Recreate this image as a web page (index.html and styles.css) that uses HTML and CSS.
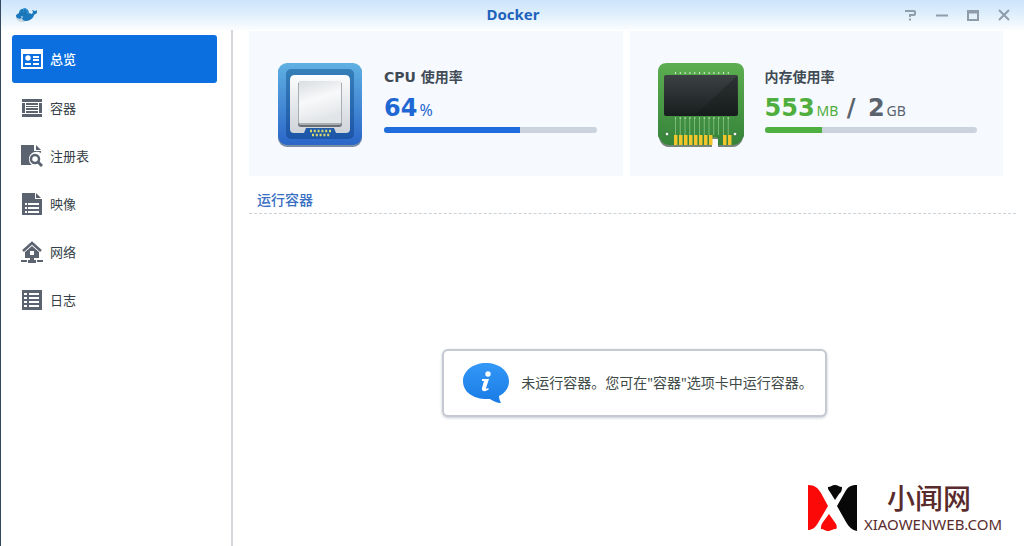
FILE: index.html
```html
<!DOCTYPE html>
<html lang="zh-CN">
<head>
<meta charset="utf-8">
<meta name="viewport" content="width=device-width, initial-scale=1">
<title>Docker</title>
<link rel="stylesheet" href="styles.css">
</head>
<body>
<div class="window">
  <header class="titlebar">
    <svg class="whale" viewBox="0 0 22 18" aria-hidden="true">
      <path d="M1 9l3-2 1-3 5-2 3 2 1 3 3 1 1-2-1-2 3 1 3-1-1 3-3 2c-1 4-5 6-9 6C5 16 1 14 1 9z" fill="#1b78bd"/>
      <path d="M4 7l1-3 5-2 3 2 1 4z" fill="#2f9ae0"/>
      <path d="M5 5h8M4 7h9M7 3v5M10 3v5" stroke="#135b94" stroke-width=".7"/>
      <path d="M1 11c2 2 4 2 6 1 0 2 2 3 4 3-4 2-9 1-10-4z" fill="#c7d7df"/>
      <circle cx="7" cy="11" r=".8" fill="#fff"/>
    </svg>
    <h1 class="title">Docker</h1>
    <div class="controls">
      <button class="control" type="button" aria-label="帮助"><svg viewBox="0 0 14 14"><path d="M1 3h9a1 1 0 0 1 1 1v2a1 1 0 0 1-1 1H6v2M6 10.500v2"/></svg></button>
      <button class="control" type="button" aria-label="最小化"><svg viewBox="0 0 14 14"><path d="M1 7.500h12"/></svg></button>
      <button class="control" type="button" aria-label="最大化"><svg viewBox="0 0 14 14"><path d="M2 3h10v9H2zM2 4.500h10"/></svg></button>
      <button class="control" type="button" aria-label="关闭"><svg viewBox="0 0 14 14"><path d="M2 2l10 10M12 2L2 12"/></svg></button>
    </div>
  </header>
  <div class="body">
    <nav class="sidebar">
      <a class="item item-active" href="#overview" aria-current="page">
        <svg class="icon" viewBox="0 0 22 22"><path fill-rule="evenodd" d="M0 1h22v20H0zM2 6v13h18V6z"/><circle cx="7" cy="10" r="2.700"/><path d="M4 15h6v2H4zM12 8h6v2h-6zM12 11h6v2h-6zM12 15h6v2h-6z"/></svg>总览</a>
      <a class="item" href="#container">
        <svg class="icon" viewBox="0 0 22 22"><path d="M1 2h20v3H1zM1 17h20v3H1zM1 6h3v10H1zM18 6h3v10h-3zM5 6h12v2H5zM5 9h12v1H5zM5 11h12v2H5zM5 14h12v2H5z"/></svg>容器</a>
      <a class="item" href="#registry">
        <svg class="icon" viewBox="0 0 22 22"><path d="M0 0h13v6h7v2c-5-3-12 0-12 6 0 3 1 5 3 6H0z"/><path d="M15 0l5 5h-5z"/><circle cx="14" cy="14" r="4" fill="none" stroke="currentColor" stroke-width="2.500"/><path d="M17 17l4 4" stroke="currentColor" stroke-width="3"/></svg>注册表</a>
      <a class="item" href="#image">
        <svg class="icon" viewBox="0 0 22 22"><path fill-rule="evenodd" d="M1 0h13v6h7v16H1zM4 10v2h2v-2zM7 10v2h11v-2zM4 14v2h2v-2zM7 14v2h11v-2zM4 18v2h2v-2zM7 18v2h11v-2z"/><path d="M15 0l5 5h-5z"/></svg>映像</a>
      <a class="item" href="#network">
        <svg class="icon" viewBox="0 0 22 22"><path d="M2 10l9-8 9 8" fill="none" stroke="currentColor" stroke-width="2.500"/><path fill-rule="evenodd" d="M11 5l7 6v6h-5v2h2v3H7v-3h2v-2H4v-6zM9 10v4h4v-4zM0 19h6v2H0zM16 19h6v2h-6z"/></svg>网络</a>
      <a class="item" href="#log">
        <svg class="icon" viewBox="0 0 22 22"><path fill-rule="evenodd" d="M1 1h20v20H1zM3 4v2h3V4zM8 4v2h10V4zM3 8v2h3V8zM8 8v2h10V8zM3 12v2h3v-2zM8 12v2h10v-2zM3 16v2h3v-2zM8 16v2h10v-2z"/></svg>日志</a>
    </nav>
    <main class="main">
      <div class="cards">
        <section class="card">
          <svg class="art" viewBox="0 0 88 88" aria-hidden="true">
            <defs>
              <linearGradient id="blue" x2="0" y2="1"><stop stop-color="#5fb0e2"/><stop offset="1" stop-color="#2b66c8"/></linearGradient>
              <linearGradient id="inner" x2="0" y2="1"><stop stop-color="#357fb9"/><stop offset="1" stop-color="#1d55a8"/></linearGradient>
              <linearGradient id="plate" x2="0" y2="1"><stop stop-color="#fbfcfd"/><stop offset="1" stop-color="#cfd4da"/></linearGradient>
              <linearGradient id="die" x2=".3" y2="1"><stop stop-color="#d9dde1"/><stop offset=".5" stop-color="#f8f9fa"/><stop offset="1" stop-color="#e2e5e8"/></linearGradient>
            </defs>
            <rect x="2" y="3" width="84" height="83" rx="9" fill="#7c8da5"/>
            <rect x="2" y="2" width="84" height="82" rx="9" fill="url(#blue)"/>
            <rect x="10" y="8" width="68" height="70" rx="5" fill="url(#inner)"/>
            <path d="M19 14h50q5 0 5 5v49q0 4-4 4H60l-2-5H30l-2 5H18q-4 0-4-4V19q0-5 5-5z" fill="url(#plate)"/>
            <rect x="22" y="21" width="44" height="45" rx="3" fill="#6a6f75"/>
            <rect x="22" y="21" width="44" height="43" rx="3" fill="#a9aeb3"/>
            <rect x="23" y="20" width="42" height="42" rx="1" fill="url(#die)"/>
            <path d="M34 70h22M36 74h19" stroke="#d9d96a" stroke-width="2.500" stroke-dasharray="2 1.800"/>
          </svg>
          <div class="usage">
            <h2 class="label" id="cpu">CPU 使用率</h2>
            <p class="value value-cpu">64<span class="unit unit-cpu">%</span></p>
            <div class="track" role="progressbar" aria-labelledby="cpu" aria-valuenow="64"><div class="fill fill-cpu" style="width:64%"></div></div>
          </div>
        </section>
        <section class="card">
          <svg class="art" viewBox="0 0 88 88" aria-hidden="true">
            <defs>
              <linearGradient id="green" x2="0" y2="1"><stop stop-color="#5cae50"/><stop offset="1" stop-color="#35833a"/></linearGradient>
              <linearGradient id="chip" x2="0" y2="1"><stop stop-color="#3c4243"/><stop offset="1" stop-color="#181d1e"/></linearGradient>
            </defs>
            <path d="M10 3h68q9 0 9 9v62l-2 6q-4 6-9 6H61v-8h-6v8H12q-6 0-9-6l-2-6V12Q1 3 10 3z" fill="#77867a"/>
            <path d="M10 2h68q9 0 9 9v63q0 2-2 4l-2 3q-3 3-7 3H61v-5a3 3 0 0 0-6 0v5H12q-4 0-7-3l-2-3q-2-2-2-4V11q0-9 9-9z" fill="url(#green)"/>
            <path d="M18 12h55M18 57h55" stroke="#d7edcf" stroke-width="2" stroke-dasharray="1 3.800"/>
            <path d="M18 65h55" stroke="#8ac486" stroke-width="18" stroke-dasharray=".8 4"/>
            <rect x="7" y="14" width="74" height="41" rx="2" fill="url(#chip)"/>
            <path d="M80 15v39H38z" fill="#151a1b" opacity=".35"/>
            <path d="M17 79h39M66 79h9" stroke="#f2c62a" stroke-width="10" stroke-dasharray="3.500 1.500"/>
            <circle cx="10" cy="73" r="2" fill="#f3f6ef" stroke="#2d6e32"/><circle cx="78" cy="73" r="2" fill="#f3f6ef" stroke="#2d6e32"/>
          </svg>
          <div class="usage">
            <h2 class="label" id="memory">内存使用率</h2>
            <p class="value value-memory">553<span class="unit">MB</span> <span class="slash">/</span> <span class="total">2<span class="unit">GB</span></span></p>
            <div class="track" role="progressbar" aria-labelledby="memory" aria-valuenow="27"><div class="fill fill-memory" style="width:27%"></div></div>
          </div>
        </section>
      </div>
      <h2 class="section-title">运行容器</h2>
      <div class="empty">
        <div class="message" role="status">
          <svg class="info" viewBox="0 0 48 42" aria-hidden="true">
            <defs><linearGradient id="bubble" x2="0" y2="1"><stop stop-color="#3398f6"/><stop offset="1" stop-color="#187be6"/></linearGradient></defs>
            <path d="M24 1c13 0 23 8 23 18 0 7-4 12-10 15 0 3 1 5 2 7-4 0-8-2-11-4C13 38 1 31 1 19 1 9 11 1 24 1z" fill="url(#bubble)"/>
            <circle cx="26" cy="12" r="2.700" fill="#fff"/>
            <path d="M20 17h7l-3 9c0 1 1 1 2 0l1 1c-3 3-8 3-7-1l2-7h-2z" fill="#fff"/>
          </svg>
          <p class="message-text">未运行容器。您可在"容器"选项卡中运行容器。</p>
        </div>
      </div>
    </main>
  </div>
  <div class="brand">
    <svg class="brand-mark" viewBox="0 0 49 48" aria-hidden="true">
      <path d="M0 1c7 0 10 3 13 8l7 13L10 39c-3 5-6 7-10 7zM21 30l7 10c1 2 1 4 0 5-4 0-5 2-8 2s-4-2-7-2c0-3 0-4 2-7z" fill="#fb0909"/>
      <path d="M49 1c-7 0-9 2-12 7l-8 14 9 16c3 5 6 8 11 9zM20 3c3 0 4-2 7-2s4 2 7 2c0 4-1 5-3 7l-4 6-5-8c-2-3-2-3-2-5z" fill="#080808"/>
    </svg>
    <div class="brand-text"><span class="brand-name">小闻网</span><span class="brand-url">XIAOWENWEB.COM</span></div>
  </div>
</div>
</body>
</html>
```
FILE: styles.css
```css
* { box-sizing: border-box; }
body {
  margin: 0;
  background: #fff;
  color: #414b55;
  font: 13px/20px "Noto Sans", "Noto Sans CJK SC", sans-serif;
}
h1, h2, p { margin: 0; }
.window {
  position: relative;
  display: flex;
  flex-direction: column;
  min-height: 100vh;
  border-left: 1px solid #34495e;
}
.titlebar {
  display: grid;
  grid-template-columns: 1fr auto 1fr;
  align-items: center;
  height: 30px;
  padding: 0 13px 0 14px;
  background: linear-gradient(#cce4fb, #e0f0fc 50%, #fbfdfe);
}
.whale { width: 22px; height: 18px; }
.title { color: #1f62bd; font-size: 15px; line-height: 28px; font-weight: 700; padding-bottom: 2px; }
.controls { display: flex; justify-content: flex-end; gap: 17px; }
.control { width: 14px; height: 14px; padding: 0; border: 0; background: none; }
.control svg { display: block; fill: none; stroke: #8f9dab; stroke-width: 2; }
.body { display: flex; flex: 1; }
.sidebar {
  flex: none;
  width: 232px;
  padding: 5px 14px 0 11px;
  border-right: 2px solid #d3d6da;
}
.item {
  display: flex;
  align-items: center;
  gap: 7px;
  height: 48px;
  padding-left: 9px;
  border-radius: 3px;
  color: #363f48;
  text-decoration: none;
}
.item-active { margin-bottom: 1px; background: #0c6fe0; color: #fff; font-weight: 500; }
.icon { width: 22px; height: 22px; fill: currentColor; color: #5a636f; }
.item-active .icon { color: #fff; }
.main {
  display: flex;
  flex: 1;
  flex-direction: column;
  min-width: 0;
  padding: 1px 8px 0 16px;
}
.cards { display: flex; gap: 7px; padding-right: 13px; }
.card {
  display: flex;
  flex: 1;
  gap: 20px;
  height: 145px;
  padding: 30px 26px 0 27px;
  background: #f6faff;
}
.art { flex: none; width: 88px; height: 88px; }
.usage { flex: 1; padding-top: 6px; }
.label { font: 700 14px/20px "DejaVu Sans", "Noto Sans CJK SC", sans-serif; color: #414b55; }
.value { font: 700 24px/32px "DejaVu Sans", sans-serif; margin-top: 5px; white-space: nowrap; }
.value-cpu { color: #1f68d4; }
.value-memory { color: #4fae3d; }
.slash, .total { color: #5b636d; }
.slash { margin-right: 4px; }
.unit { margin-left: 2px; font: 400 14px/20px "Noto Sans", sans-serif; }
.unit-cpu { font-size: 16px; }
.track { height: 6px; margin-top: 3px; overflow: hidden; border-radius: 3px; background: #cad3de; }
.fill { height: 100%; }
.fill-cpu { background: #1f6ddc; }
.fill-memory { background: #4fb041; }
.section-title {
  padding: 14px 8px 3px;
  border-bottom: 1px dashed #c8d2d8;
  color: #3a70c4;
  font-size: 14px;
  line-height: 20px;
  font-weight: 500;
}
.empty { display: flex; flex: 1; align-items: center; justify-content: center; padding: 6px 0 0 4px; }
.message {
  display: flex;
  align-items: center;
  gap: 11px;
  padding: 11px 12px 11px 18px;
  border: 2px solid #c5cad2;
  border-radius: 6px;
  background: #fff;
  box-shadow: 0 1px 3px #c5cad2;
}
.info { width: 48px; height: 42px; }
.message-text { color: #414b48; font-size: 14px; white-space: nowrap; }
.brand { position: absolute; right: 22px; bottom: 12px; display: flex; align-items: center; gap: 7px; color: #592b2c; }
.brand-mark { width: 49px; height: 48px; }
.brand-text { display: flex; flex-direction: column; align-items: center; }
.brand-name { padding-right: 8px; font-size: 28px; line-height: 32px; font-weight: 500; }
.brand-url { font-size: 15px; line-height: 20px; }
```
